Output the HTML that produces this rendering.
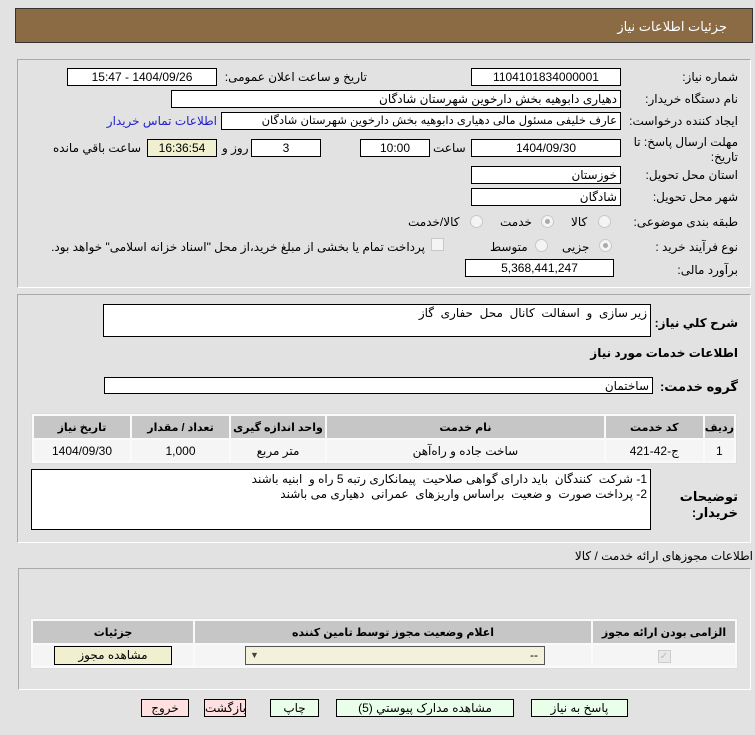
<!DOCTYPE html>
<html><head><meta charset="utf-8"><style>
*{margin:0;padding:0;box-sizing:border-box}
body{width:755px;height:735px;background:#e2e2e2;font-family:"Liberation Sans","DejaVu Sans",sans-serif;font-size:12px;color:#000;position:relative;overflow:hidden}
.a{position:absolute;white-space:nowrap}
.box{position:absolute;background:#fff;border:1px solid #000;height:18px;line-height:16px;padding:0 3px;direction:rtl;white-space:nowrap;font-size:12px;overflow:hidden}
.c{text-align:center}
.l{text-align:right;direction:rtl}
.panel{position:absolute;border:1px solid #a9a9a9;border-right-color:#fff;border-bottom-color:#fff}
.rad{position:absolute;width:13px;height:13px;border-radius:50%;border:1px solid #c8c8c8;background:#f4f4f4}
.rad.on:after{content:"";position:absolute;left:3px;top:3px;width:5px;height:5px;border-radius:50%;background:#aaa}
table{position:absolute;border-collapse:separate;border-spacing:2px;background:#fafafa;border:1px solid #ddd}
th{background:#c6c6c6;font-weight:bold;font-size:11px;height:22px}
td{background:#f5f5f5;text-align:center;height:21px;font-size:12px}
.btn{position:absolute;height:18px;border:1px solid #000;line-height:16px;text-align:center;background:#eaffea;font-size:12px;white-space:nowrap}
.pink{background:#ffe0e0}
</style></head><body>
<div class="a" style="left:15px;top:8px;width:738px;height:35px;background:#8b6b43;border:1px solid #333"></div>
<div class="a" style="right:28px;top:19px;color:#fff;font-size:13px">جزئیات اطلاعات نیاز</div>

<div class="panel" style="left:17px;top:59px;width:734px;height:229px"></div>
<div class="a l" style="right:17px;top:70px">شماره نیاز:</div>
<div class="box c" style="left:471px;top:68px;width:150px">1104101834000001</div>
<div class="a l" style="right:388px;top:70px">تاریخ و ساعت اعلان عمومی:</div>
<div class="box c" style="left:67px;top:68px;width:150px">1404/09/26 - 15:47</div>

<div class="a l" style="right:17px;top:92px">نام دستگاه خریدار:</div>
<div class="box" style="left:171px;top:90px;width:450px">دهیاری دابوهیه بخش دارخوین شهرستان شادگان</div>

<div class="a l" style="right:17px;top:114px">ایجاد کننده درخواست:</div>
<div class="box" style="left:221px;top:112px;width:400px;font-size:11.5px;letter-spacing:-0.2px">عارف خلیفی مسئول مالی دهیاری دابوهیه بخش دارخوین شهرستان شادگان</div>
<div class="a l" style="right:538px;top:114px;color:#2222cc;font-size:12px">اطلاعات تماس خریدار</div>

<div class="a l" style="right:17px;top:135px;line-height:15px;text-align:right">مهلت ارسال پاسخ: تا<br>تاریخ:</div>
<div class="box c" style="left:471px;top:139px;width:150px">1404/09/30</div>
<div class="a" style="left:433px;top:141px">ساعت</div>
<div class="box c" style="left:360px;top:139px;width:70px">10:00</div>
<div class="box c" style="left:251px;top:139px;width:70px">3</div>
<div class="a" style="left:222px;top:141px">روز و</div>
<div class="box c" style="left:147px;top:139px;width:70px;background:#f0f0d0">16:36:54</div>
<div class="a" style="left:53px;top:141px">ساعت باقي مانده</div>

<div class="a l" style="right:17px;top:168px">استان محل تحویل:</div>
<div class="box" style="left:471px;top:166px;width:150px">خوزستان</div>
<div class="a l" style="right:17px;top:190px">شهر محل تحویل:</div>
<div class="box" style="left:471px;top:188px;width:150px">شادگان</div>

<div class="a l" style="right:17px;top:215px">طبقه بندی موضوعی:</div>
<div class="rad" style="left:598px;top:215px"></div><div class="a" style="left:571px;top:215px">کالا</div>
<div class="rad on" style="left:541px;top:215px"></div><div class="a" style="left:500px;top:215px">خدمت</div>
<div class="rad" style="left:470px;top:215px"></div><div class="a" style="left:408px;top:215px">کالا/خدمت</div>

<div class="a l" style="right:17px;top:240px">نوع فرآیند خرید :</div>
<div class="rad on" style="left:599px;top:239px"></div><div class="a" style="left:562px;top:240px">جزیی</div>
<div class="rad" style="left:535px;top:239px"></div><div class="a" style="left:490px;top:240px">متوسط</div>
<div class="a" style="left:431px;top:238px;width:13px;height:13px;border:1px solid #c8c8c8;background:#f4f4f4"></div>
<div class="a l" style="right:330px;top:240px;direction:rtl">پرداخت تمام یا بخشی از مبلغ خرید،از محل "اسناد خزانه اسلامی" خواهد بود.</div>

<div class="a l" style="right:17px;top:263px">برآورد مالی:</div>
<div class="box c" style="left:465px;top:259px;width:149px">5,368,441,247</div>

<div class="panel" style="left:17px;top:294px;width:734px;height:249px"></div>
<div class="a l" style="right:17px;top:316px;font-weight:bold">شرح کلي نیاز:</div>
<div class="box" style="left:103px;top:304px;width:548px;height:33px">زیر سازی &nbsp;و &nbsp;اسفالت &nbsp;کانال &nbsp;محل &nbsp;حفاری &nbsp;گاز</div>
<div class="a l" style="right:17px;top:346px;font-weight:bold">اطلاعات خدمات مورد نیاز</div>
<div class="a l" style="right:17px;top:379px;font-weight:bold;font-size:13px">گروه خدمت:</div>
<div class="box" style="left:104px;top:377px;width:549px;height:17px">ساختمان</div>

<table style="left:31px;top:413px;width:706px" dir="rtl">
<tr><th style="width:25px">ردیف</th><th style="width:97px">کد خدمت</th><th>نام خدمت</th><th style="width:94px">واحد اندازه گیری</th><th style="width:97px">تعداد / مقدار</th><th style="width:96px">تاریخ نیاز</th></tr>
<tr><td>1</td><td>ج-42-421</td><td>ساخت جاده و راه‌آهن</td><td>متر مربع</td><td>1,000</td><td>1404/09/30</td></tr>
</table>

<div class="box" style="left:31px;top:469px;width:620px;height:61px;line-height:15px;padding-top:2px;white-space:normal">1- شرکت &nbsp;کنندگان &nbsp;باید دارای گواهی صلاحیت &nbsp;پیمانکاری رتبه 5 راه و &nbsp;ابنیه باشند<br>2- پرداخت صورت &nbsp;و ضعیت &nbsp;براساس واریزهای &nbsp;عمرانی &nbsp;دهیاری می باشند</div>
<div class="a l" style="right:17px;top:489px;font-weight:bold;line-height:16px;text-align:right;font-size:13px">توضیحات<br>خریدار:</div>

<div class="a l" style="right:2px;top:549px">اطلاعات مجوزهای ارائه خدمت / کالا</div>
<div class="panel" style="left:18px;top:568px;width:733px;height:122px"></div>
<table style="left:30px;top:618px;width:708px" dir="rtl">
<tr><th style="width:142px">الزامی بودن ارائه مجوز</th><th>اعلام وضعیت مجوز توسط تامین کننده</th><th style="width:160px">جزئیات</th></tr>
<tr><td><span style="display:inline-block;width:13px;height:13px;border:1px solid #ccc;background:#e8e8e8;color:#bbb;font-size:10px;line-height:12px">✓</span></td>
<td style="position:relative"><div style="margin:0 auto 0 50px;width:300px;height:19px;border:1px solid #555;background:#f3f0db;text-align:right;padding-right:6px;line-height:17px;position:relative">--<span style="position:absolute;left:4px;top:0;font-size:9px;color:#444">▼</span></div></td>
<td><div style="margin:0 auto;width:118px;height:19px;border:1px solid #000;background:#f0f0d0;line-height:17px">مشاهده مجوز</div></td></tr>
</table>

<div class="btn" style="left:531px;top:699px;width:97px">پاسخ به نیاز</div>
<div class="btn" style="left:336px;top:699px;width:178px">مشاهده مدارک پیوستي (5)</div>
<div class="btn" style="left:270px;top:699px;width:49px">چاپ</div>
<div class="btn pink" style="left:204px;top:699px;width:42px">بازگشت</div>
<div class="btn pink" style="left:141px;top:699px;width:48px">خروج</div>
</body></html>
